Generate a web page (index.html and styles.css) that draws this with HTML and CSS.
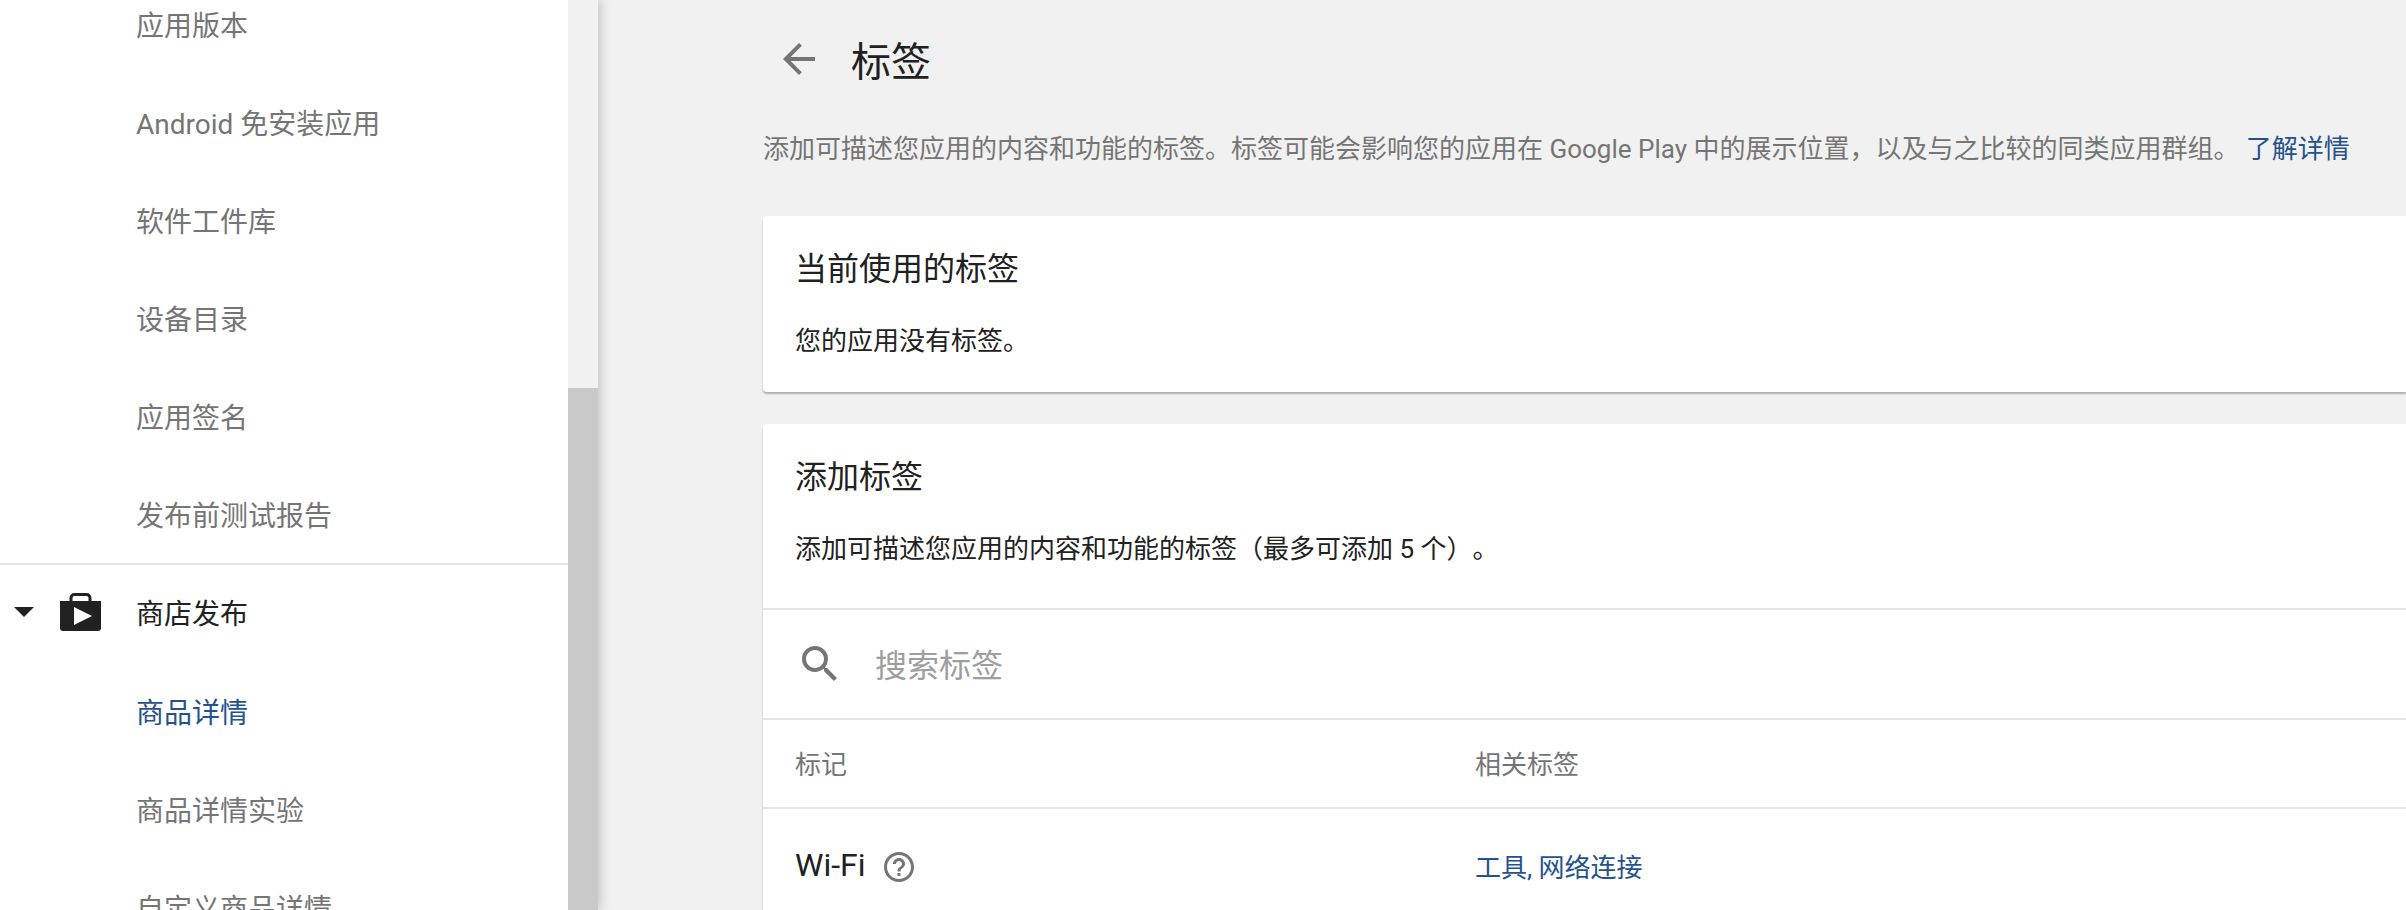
FILE: index.html
```html
<!DOCTYPE html>
<html lang="zh-CN">
<head>
  <meta charset="UTF-8" />
  <title>标签</title>
  <link rel="stylesheet" href="styles.css">
</head>
<body>
  <aside class="sidebar">
    <nav class="nav">
      <ul class="nav-list">
        <li class="nav-item">应用版本</li>
        <li class="nav-item">Android 免安装应用</li>
        <li class="nav-item">软件工件库</li>
        <li class="nav-item">设备目录</li>
        <li class="nav-item">应用签名</li>
        <li class="nav-item">发布前测试报告</li>
      </ul>
      <div class="nav-section">
        <svg class="caret" viewBox="0 0 20 10"><path d="M0 0h20L10 10z"/></svg>
        <svg class="bag" viewBox="0 0 41 38">
          <path d="M11 9V5a3.5 3.5 0 0 1 3.5-3.5h12A3.5 3.5 0 0 1 30 5v4" fill="none" stroke="#212121" stroke-width="3"/>
          <path d="M0 8h41v27a3 3 0 0 1-3 3H3a3 3 0 0 1-3-3z" fill="#212121"/>
          <path d="M14 14l18 9-18 9z" fill="#fff"/>
        </svg>
        <span>商店发布</span>
      </div>
      <ul class="nav-list">
        <li class="nav-item active">商品详情</li>
        <li class="nav-item">商品详情实验</li>
        <li class="nav-item">自定义商品详情</li>
      </ul>
    </nav>
    <div class="scrollbar"><div class="thumb"></div></div>
  </aside>

  <main class="main">
    <div class="page-head">
      <svg class="back" viewBox="0 0 24 24"><path d="M20 11H7.83l5.59-5.59L12 4l-8 8 8 8 1.41-1.41L7.83 13H20v-2z"/></svg>
      <h1>标签</h1>
    </div>
    <p class="intro">添加可描述您应用的内容和功能的标签。标签可能会影响您的应用在 Google Play 中的展示位置，以及与之比较的同类应用群组。 <a href="#">了解详情</a></p>

    <section class="card card-current">
      <h2>当前使用的标签</h2>
      <p>您的应用没有标签。</p>
    </section>

    <section class="card">
      <div class="card-top">
        <h2>添加标签</h2>
        <p>添加可描述您应用的内容和功能的标签（最多可添加 5 个）。</p>
      </div>
      <div class="search">
        <svg class="search-icon" viewBox="0 0 24 24"><path d="M15.5 14h-.79l-.28-.27A6.471 6.471 0 0 0 16 9.5 6.5 6.5 0 1 0 9.5 16c1.61 0 3.09-.59 4.23-1.57l.27.28v.79l5 4.99L20.49 19l-4.99-5zm-6 0C7.01 14 5 11.99 5 9.5S7.01 5 9.5 5 14 7.01 14 9.5 11.99 14 9.5 14z"/></svg>
        <span class="search-text">搜索标签</span>
      </div>
      <div class="tag-row tag-head">
        <div>标记</div>
        <div>相关标签</div>
      </div>
      <div class="tag-row tag-item">
        <div class="tag-name">
          Wi-Fi
          <svg class="help" viewBox="0 0 24 24"><path d="M11 18h2v-2h-2v2zm1-16C6.48 2 2 6.48 2 12s4.48 10 10 10 10-4.48 10-10S17.52 2 12 2zm0 18c-4.41 0-8-3.59-8-8s3.59-8 8-8 8 3.59 8 8-3.59 8-8 8zm0-14c-2.21 0-4 1.79-4 4h2c0-1.1.9-2 2-2s2 .9 2 2c0 2-3 1.75-3 5h2c0-2.25 3-2.5 3-5 0-2.21-1.79-4-4-4z"/></svg>
        </div>
        <div><a href="#">工具, 网络连接</a></div>
      </div>
    </section>
  </main>
</body>
</html>
```

FILE: styles.css
```css
* {
  margin: 0;
  padding: 0;
  box-sizing: border-box;
  font-family: "Roboto", "Noto Sans CJK SC", sans-serif;
  text-spacing-trim: space-all;
}

body {
  display: flex;
  height: 910px;
  overflow: hidden;
  background: #f1f1f1;
  color: #212121;
}

a {
  color: #24528f;
  text-decoration: none;
}

/* sidebar */
.sidebar {
  display: flex;
  flex: none;
  width: 598px;
  height: 100%;
  background: #fff;
  box-shadow: 3px 0 10px rgba(0, 0, 0, 0.18);
}

.nav {
  width: 568px;
  margin-top: -25px;
  font-size: 28px;
  color: #757575;
}

.nav-list {
  list-style: none;
}

.nav-item {
  display: flex;
  align-items: center;
  height: 98px;
  padding-left: 136px;
}

.nav-item.active {
  color: #24528f;
}

.nav-section {
  display: flex;
  align-items: center;
  height: 99px;
  padding-bottom: 3px;
  border-top: 2px solid #e4e4e4;
  color: #212121;
}

.caret {
  width: 20px;
  height: 10px;
  margin-left: 14px;
  fill: #212121;
}

.bag {
  width: 41px;
  height: 38px;
  margin: 0 35px 0 26px;
}

.scrollbar {
  display: flex;
  flex-direction: column;
  width: 30px;
  padding-top: 388px;
  background: #f1f1f1;
}

.thumb {
  flex: 1;
  background: #c8c8c8;
}

/* main column */
.main {
  flex: 1;
  min-width: 0;
  padding-left: 165px;
}

.page-head {
  display: flex;
  align-items: center;
  height: 118px;
  padding-left: 12px;
}

.back {
  width: 48px;
  height: 48px;
  margin-right: 28px;
  fill: #757575;
}

.page-head h1 {
  padding-top: 8px;
  font-size: 40px;
  font-weight: 400;
  line-height: 48px;
}

.intro {
  margin-top: 13px;
  font-size: 26px;
  line-height: 36px;
  color: #757575;
  white-space: nowrap;
}

.card {
  margin-top: 32px;
  background: #fff;
  border-radius: 4px 0 0 4px;
  box-shadow: 0 2px 2px rgba(0, 0, 0, 0.28);
}

.intro + .card {
  margin-top: 49px;
}

.card h2 {
  font-size: 32px;
  font-weight: 400;
  line-height: 40px;
}

.card p {
  font-size: 26px;
  line-height: 36px;
  margin-top: 34px;
}

.card-current {
  padding: 33px 32px;
}

.card-top {
  padding: 33px 32px 41px;
  border-bottom: 2px solid #e4e4e4;
}

.search {
  display: flex;
  align-items: center;
  height: 110px;
  padding-left: 33px;
  border-bottom: 2px solid #e4e4e4;
  font-size: 32px;
  color: #9e9e9e;
}

.search-icon {
  width: 48px;
  height: 48px;
  margin-right: 31px;
  fill: #757575;
}

.search-text {
  padding-bottom: 3px;
}

.tag-row {
  display: grid;
  grid-template-columns: 680px 1fr;
  align-items: center;
  padding-left: 32px;
}

.tag-head {
  height: 89px;
  padding-bottom: 2px;
  border-bottom: 2px solid #e4e4e4;
  font-size: 26px;
  color: #757575;
}

.tag-item {
  height: 112px;
  font-size: 26px;
}

.tag-name {
  display: flex;
  align-items: center;
  font-size: 32px;
}

.help {
  width: 36px;
  height: 36px;
  margin: 4px 0 0 16px;
  fill: #757575;
}
```
